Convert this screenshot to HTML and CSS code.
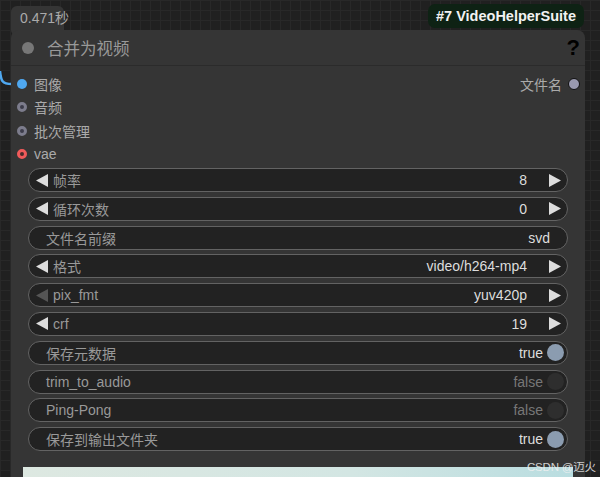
FILE: index.html
```html
<!DOCTYPE html>
<html lang="zh">
<head>
<meta charset="utf-8">
<link rel="stylesheet" href="styles.css">
</head>
<body>
<div class="canvas">
  <svg class="link" width="14" height="20" viewBox="0 0 14 20"><path d="M0 0 C1 10 2 13 12 13" fill="none" stroke="#4fa8f0" stroke-width="2.5"/></svg>
  <div class="timing">0.471秒</div>
  <div class="badge">#7 VideoHelperSuite</div>
  <div class="node">
    <div class="title">
      <span class="tdot"></span>
      <span class="ttext">合并为视频</span>
      <span class="help">?</span>
    </div>
    <div class="body">
      <div class="ios">
        <div class="io"><span class="dot blue"></span><span>图像</span><span class="out">文件名 <span class="odot"></span></span></div>
        <div class="io"><span class="dot ring"></span><span>音频</span></div>
        <div class="io"><span class="dot ring"></span><span>批次管理</span></div>
        <div class="io"><span class="dot red"></span><span>vae</span></div>
      </div>
      <div class="widgets">
        <div class="w num"><svg class="arr l" viewBox="0 0 12 13"><path d="M0 6.5 L12 0 L12 13 Z"/></svg><span class="lab">帧率</span><span class="val">8</span><svg class="arr r" viewBox="0 0 12 13"><path d="M12 6.5 L0 0 L0 13 Z"/></svg></div>
        <div class="w num"><svg class="arr l" viewBox="0 0 12 13"><path d="M0 6.5 L12 0 L12 13 Z"/></svg><span class="lab">循环次数</span><span class="val">0</span><svg class="arr r" viewBox="0 0 12 13"><path d="M12 6.5 L0 0 L0 13 Z"/></svg></div>
        <div class="w txt"><span class="lab">文件名前缀</span><span class="val">svd</span></div>
        <div class="w num"><svg class="arr l" viewBox="0 0 12 13"><path d="M0 6.5 L12 0 L12 13 Z"/></svg><span class="lab">格式</span><span class="val">video/h264-mp4</span><svg class="arr r" viewBox="0 0 12 13"><path d="M12 6.5 L0 0 L0 13 Z"/></svg></div>
        <div class="w num"><svg class="arr l dim" viewBox="0 0 12 13"><path d="M0 6.5 L12 0 L12 13 Z"/></svg><span class="lab">pix_fmt</span><span class="val">yuv420p</span><svg class="arr r" viewBox="0 0 12 13"><path d="M12 6.5 L0 0 L0 13 Z"/></svg></div>
        <div class="w num"><svg class="arr l" viewBox="0 0 12 13"><path d="M0 6.5 L12 0 L12 13 Z"/></svg><span class="lab">crf</span><span class="val">19</span><svg class="arr r" viewBox="0 0 12 13"><path d="M12 6.5 L0 0 L0 13 Z"/></svg></div>
        <div class="w tog"><span class="lab">保存元数据</span><span class="val">true</span><span class="knob on"></span></div>
        <div class="w tog"><span class="lab">trim_to_audio</span><span class="val off">false</span><span class="knob"></span></div>
        <div class="w tog"><span class="lab">Ping-Pong</span><span class="val off">false</span><span class="knob"></span></div>
        <div class="w tog"><span class="lab">保存到输出文件夹</span><span class="val">true</span><span class="knob on"></span></div>
      </div>
      <div class="preview"></div>
    </div>
  </div>
  <div class="mark">CSDN @迈火</div>
</div>
</body>
</html>
```
FILE: styles.css
```css
html, body {
  margin: 0;
  padding: 0;
}
body {
  width: 600px;
  height: 477px;
  overflow: hidden;
  background-color: #202020;
  background-image:
    linear-gradient(to right, #282828 1px, transparent 1px),
    linear-gradient(to bottom, #282828 1px, transparent 1px);
  background-size: 10px 10px;
  font-family: "Liberation Sans", "Noto Sans CJK SC", sans-serif;
}
.canvas {
  position: relative;
  width: 600px;
  height: 477px;
  overflow: hidden;
}
.link {
  position: absolute;
  left: 0;
  top: 71px;
}
.timing {
  position: absolute;
  left: 11px;
  top: 6px;
  width: 44px;
  height: 30px;
  padding-left: 9px;
  background: #353535;
  border-radius: 6px;
  color: #aaa;
  font-size: 14px;
  line-height: 24px;
  white-space: nowrap;
}
.badge {
  position: absolute;
  left: 428px;
  top: 4px;
  width: 156px;
  height: 24px;
  background: #0e2214;
  border-radius: 7px;
  color: #f2f2f2;
  font-weight: bold;
  font-size: 14.5px;
  line-height: 24px;
  text-align: center;
}
.node {
  position: absolute;
  left: 11px;
  top: 30px;
  width: 574px;
  height: 460px;
  background: #353535;
  border-radius: 8px;
}
.title {
  height: 35px;
  border-bottom: 1px solid #2b2b2b;
  display: flex;
  align-items: center;
  position: relative;
}
.tdot {
  width: 12px;
  height: 12px;
  border-radius: 50%;
  background: #777;
  margin-left: 11px;
}
.ttext {
  margin-left: 13px;
  font-size: 16.5px;
  color: #999;
}
.help {
  position: absolute;
  right: 5px;
  top: 5px;
  font-size: 22px;
  font-weight: bold;
  color: #000;
}
.body {
  padding: 6px 17px 0;
}
.ios {
  margin-left: -17px;
  margin-right: -17px;
}
.io {
  height: 23.5px;
  display: flex;
  align-items: center;
  color: #aaa;
  font-size: 14px;
}
.dot {
  width: 10px;
  height: 10px;
  border-radius: 50%;
  margin-left: 6px;
  margin-right: 7px;
  box-sizing: border-box;
}
.dot.blue { background: #4fa8f0; }
.dot.ring { background: #3c3c4a; border: 3px solid #7c7c8c; }
.dot.red { background: #4a2a2a; border: 3px solid #f05a5a; }
.out {
  margin-left: auto;
  display: flex;
  align-items: center;
  gap: 6px;
  margin-right: 5px;
}
.odot {
  width: 10px;
  height: 10px;
  border-radius: 50%;
  background: #9a9ab0;
  border: 1px solid #111;
}
.widgets {
  margin-top: 2px;
  display: flex;
  flex-direction: column;
  gap: 4.8px;
}
.w {
  height: 24px;
  box-sizing: border-box;
  border: 1px solid #636363;
  border-radius: 12px;
  background: #222;
  display: flex;
  align-items: center;
  font-size: 14px;
  color: #999;
  padding: 0 6px 0 7px;
}
.arr {
  width: 12px;
  height: 13px;
  fill: #ddd;
  flex: none;
}
.arr.dim { fill: #555; }
.arr.l { margin-right: 5px; }
.arr.r { margin-left: 22px; }
.txt, .tog { padding-left: 17px; }
.txt { padding-right: 17px; }
.val {
  margin-left: auto;
  color: #ddd;
}
.val.off { color: #777; }
.knob {
  width: 17px;
  height: 17px;
  border-radius: 50%;
  background: #2e2e2e;
  margin-left: 4px;
  margin-right: -3px;
}
.knob.on { background: #8b9cb0; }
.preview {
  margin: 16px -5px 0 -5px;
  height: 40px;
  background: linear-gradient(to right, #dde8e1, #d3e6e3 60%, #b9dde0);
}
.mark {
  position: absolute;
  left: 527px;
  top: 458px;
  color: rgba(240, 240, 240, 0.85);
  font-size: 11.5px;
  letter-spacing: -0.2px;
  white-space: nowrap;
}
```
